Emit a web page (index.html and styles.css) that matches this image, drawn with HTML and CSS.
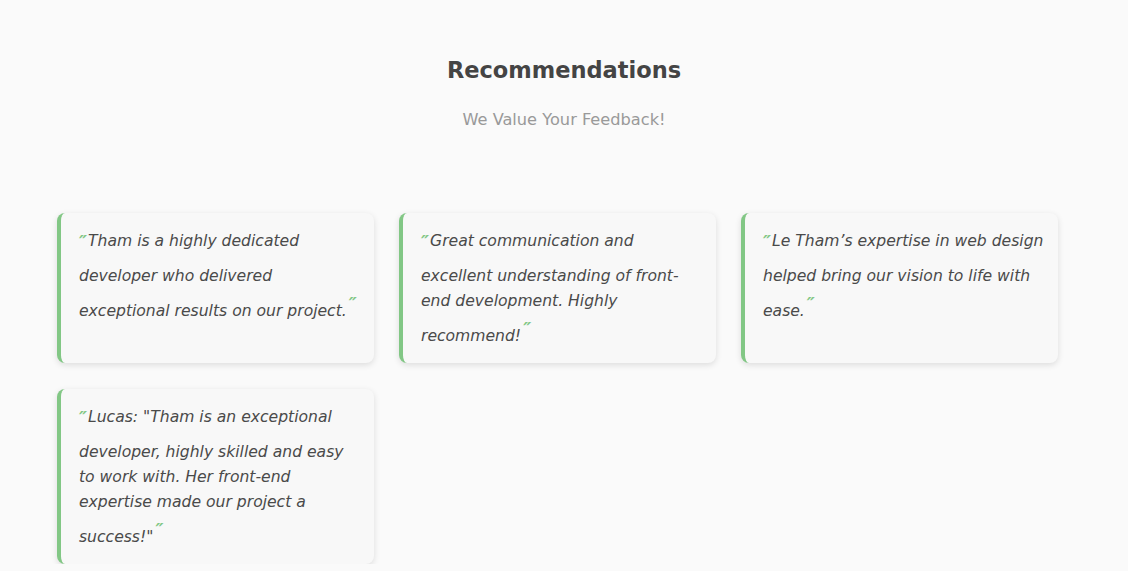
FILE: index.html
```html
<!DOCTYPE html>
<html lang="en">
<head>
<meta charset="utf-8">
<title>Recommendations</title>
<link rel="stylesheet" href="styles.css">
</head>
<body>
<section class="recs">
  <h2 class="recs-title">Recommendations</h2>
  <p class="recs-sub">We Value Your Feedback!</p>
  <div class="recs-grid">
    <div class="rec-card"><p class="rec-text"><span class="q-open">″</span>Tham is a highly dedicated developer who delivered exceptional results on our <span class="tail">project.<span class="q-close">″</span></span></p></div>
    <div class="rec-card"><p class="rec-text"><span class="q-open">″</span>Great communication and excellent understanding of front-end development. Highly <span class="tail">recommend!<span class="q-close">″</span></span></p></div>
    <div class="rec-card"><p class="rec-text"><span class="q-open">″</span>Le Tham’s expertise in web design helped bring our vision to life with <span class="tail">ease.<span class="q-close">″</span></span></p></div>
    <div class="rec-card"><p class="rec-text"><span class="q-open">″</span>Lucas: "Tham is an exceptional developer, highly skilled and easy to work with. Her front-end expertise made our project a <span class="tail">success!"<span class="q-close">″</span></span></p></div>
  </div>
</section>
</body>
</html>
```
FILE: styles.css
```css
html, body {
  margin: 0;
  padding: 0;
  background: #fafafa;
}
body {
  font-family: "DejaVu Sans", "Open Sans", sans-serif;
  color: #555;
}
.recs {
  padding: 56px 0 0 57px;
}
.recs-title {
  margin: 0;
  width: 1014px;
  text-align: center;
  font-size: 22.5px;
  font-weight: 600;
  line-height: 28px;
  color: #444;
}
.recs-sub {
  margin: 25px 0 0;
  width: 1014px;
  text-align: center;
  font-size: 16.2px;
  line-height: 22px;
  color: #999;
}
.recs-grid {
  margin-top: 82px;
  display: grid;
  grid-template-columns: repeat(3, 317px);
  column-gap: 25px;
  row-gap: 26px;
}
.rec-card {
  background: #f8f8f8;
  border-left: 4px solid #82c785;
  border-radius: 8px;
  box-shadow: 0 2px 6px rgba(0, 0, 0, 0.12);
  padding: 16px 14px 14px 18px;
}
.rec-text {
  margin: 0;
  font-style: italic;
  font-size: 15.6px;
  line-height: 25px;
  color: #4a4a4a;
}
.tail {
  white-space: nowrap;
}
.q-open,
.q-close {
  display: inline-block;
  box-sizing: border-box;
  height: 35px;
  color: #82c785;
  font-style: italic;
  font-weight: bold;
  font-size: 18px;
  line-height: 25px;
}
.q-open {
  vertical-align: top;
  margin-right: 1px;
}
.q-close {
  vertical-align: bottom;
  line-height: 18px;
  padding-top: 6px;
  margin-left: 2px;
  margin-right: -10px;
}
```
